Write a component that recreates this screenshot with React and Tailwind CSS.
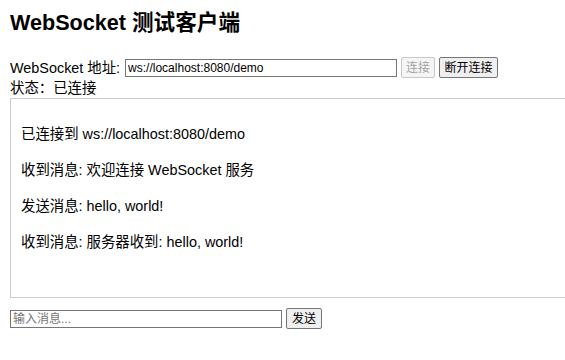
export default function App() {
  const messages = [
    "已连接到 ws://localhost:8080/demo",
    "收到消息: 欢迎连接 WebSocket 服务",
    "发送消息: hello, world!",
    "收到消息: 服务器收到: hello, world!",
  ];
  return (
    <div
      className="w-[565px] h-[360px] overflow-hidden bg-white text-black pl-[10px] pt-[11px] text-[14.4px] font-['Liberation_Sans','Noto_Sans_CJK_SC',sans-serif]"
    >
      <h2 className="text-[21.6px] font-bold leading-[24px] m-0 whitespace-nowrap">
        WebSocket 测试客户端
      </h2>
      <div className="mt-[22px] flex items-center h-[21px] whitespace-nowrap">
        <span className="leading-[16px]">WebSocket 地址:</span>
        <input
          className="ml-[5px] w-[272px] h-[18px] border border-[#767676] px-[2px] text-[12px] leading-[14px] outline-none bg-white text-black font-['Liberation_Sans','Noto_Sans_CJK_SC',sans-serif]"
          defaultValue="ws://localhost:8080/demo"
        />
        <button
          disabled
          className="ml-[4px] w-[34px] h-[21px] border border-[#c8c8c8] bg-[#f5f5f5] text-[#a3a3a3] text-[12px] leading-[14px] rounded-[2px] p-0 font-['Liberation_Sans','Noto_Sans_CJK_SC',sans-serif]"
        >
          连接
        </button>
        <button className="ml-[4px] w-[59px] h-[21px] border border-[#767676] bg-[#efefef] text-black text-[12px] leading-[14px] rounded-[2px] p-0 font-['Liberation_Sans','Noto_Sans_CJK_SC',sans-serif]">
          断开连接
        </button>
      </div>
      <div className="mt-[2px] leading-[16px]">状态：已连接</div>
      <div className="mt-[2px] w-[580px] h-[200px] border border-[#cccccc] px-[10px] pt-[11px] overflow-hidden">
        {messages.map((m, i) => (
          <p key={i} className="my-[14.4px] leading-[21.6px] whitespace-nowrap">
            {m}
          </p>
        ))}
      </div>
      <div className="mt-[10px] flex items-center h-[21px]">
        <input
          className="w-[272px] h-[18px] border border-[#767676] px-[2px] text-[12px] leading-[14px] outline-none bg-white text-black placeholder:text-[#757575] font-['Liberation_Sans','Noto_Sans_CJK_SC',sans-serif]"
          placeholder="输入消息..."
        />
        <button className="ml-[4px] w-[36px] h-[21px] border border-[#767676] bg-[#efefef] text-black text-[12px] leading-[14px] rounded-[2px] p-0 font-['Liberation_Sans','Noto_Sans_CJK_SC',sans-serif]">
          发送
        </button>
      </div>
    </div>
  );
}
